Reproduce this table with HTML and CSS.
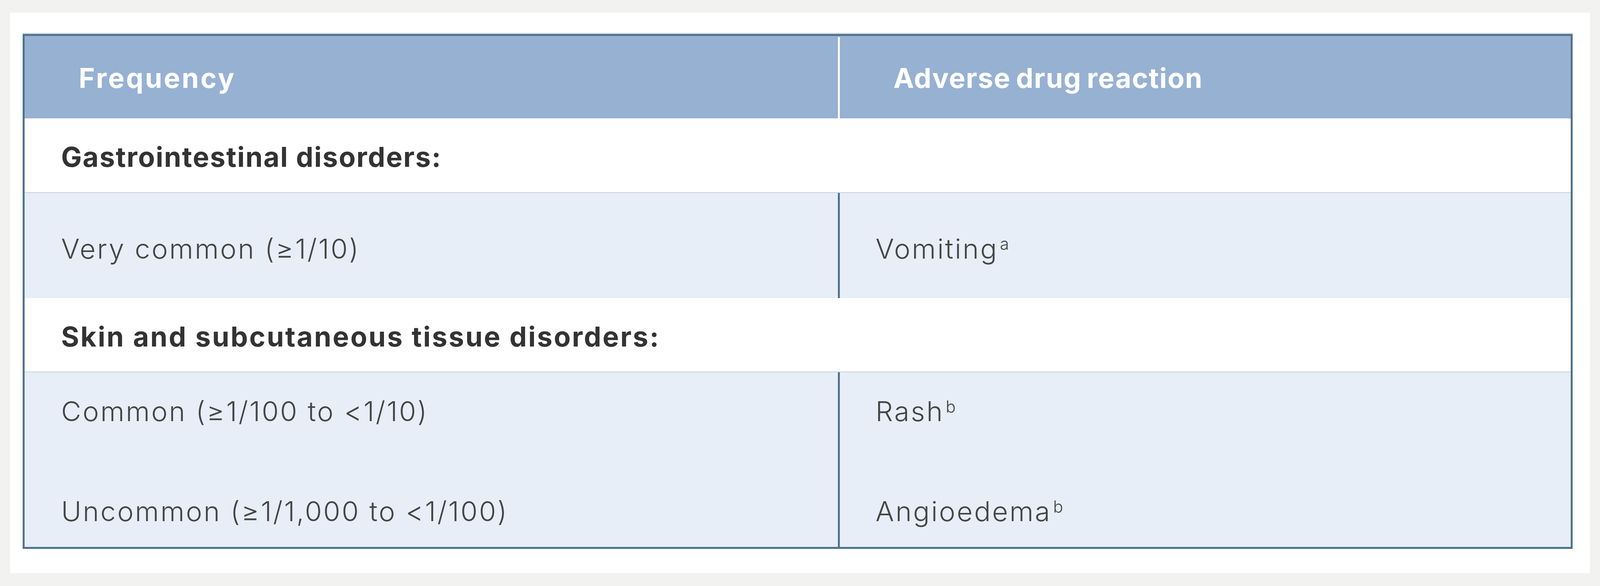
FILE: index.html
```html
<!DOCTYPE html>
<html lang="en">
<head>
<meta charset="utf-8">
<title>Adverse drug reactions</title>
<link rel="stylesheet" href="styles.css">
</head>
<body>
<div class="card">
  <div class="adr-table">
    <div class="row head">
      <div class="cell col-freq">Frequency</div>
      <div class="cell col-adr">Adverse drug reaction</div>
    </div>
    <div class="row category category-gi">
      <div class="cell">Gastrointestinal disorders:</div>
    </div>
    <div class="row data data-gi">
      <div class="cell col-freq"><p>Very common (≥1/10)</p></div>
      <div class="cell col-adr"><p>Vomiting<sup>a</sup></p></div>
    </div>
    <div class="row category category-skin">
      <div class="cell">Skin and subcutaneous tissue disorders:</div>
    </div>
    <div class="row data data-skin">
      <div class="cell col-freq">
        <p>Common (≥1/100 to &lt;1/10)</p>
        <p>Uncommon (≥1/1,000 to &lt;1/100)</p>
      </div>
      <div class="cell col-adr">
        <p>Rash<sup>b</sup></p>
        <p>Angioedema<sup>b</sup></p>
      </div>
    </div>
  </div>
</div>
</body>
</html>
```

FILE: styles.css
```css
* { box-sizing: border-box; }

html, body { margin: 0; }

html { overflow: hidden; }

body {
  background: #f2f2f0;
  padding: 32px 0.64vw;
  font-family: Inter, "Liberation Sans", sans-serif;
  font-size: 1.72vw;
}

.card {
  background: #ffffff;
  height: 1435px;
  padding: 55px 1.06vw 62px 0.78vw;
}

.adr-table {
  border: 5px solid #4e7390;
  box-shadow: 0 -3px 0 #d3dbe3;
  background: #e7eef8;
}

.row {
  display: grid;
  grid-template-columns: 2542fr 2292fr;
}

.cell {
  display: flex;
  align-items: center;
  min-width: 0;
  white-space: nowrap;
}

.cell p { margin: 0; line-height: 100px; }

/* header */
.head {
  height: 211px;
  background: #97b1d2;
  color: #ffffff;
  font-weight: 700;
  padding-top: 3px;
}
.head .col-freq {
  padding-left: 3.38vw;
  letter-spacing: 0.058em;
}
.head .col-adr {
  padding-left: 3.36vw;
  border-left: 5px solid #ffffff;
  letter-spacing: 0.023em;
  word-spacing: -0.07em;
}

/* category rows */
.category {
  display: flex;
  background: #ffffff;
  border-bottom: 2px solid #c6d1dc;
  color: #333333;
  font-weight: 700;
}
.category .cell { padding-left: 2.28vw; }
.category-gi {
  height: 191px;
  padding-top: 7px;
  letter-spacing: 0.031em;
}
.category-skin {
  height: 190px;
  padding-top: 8px;
  letter-spacing: 0.049em;
}

/* data rows */
.data {
  color: #454545;
  font-weight: 300;
  letter-spacing: 0.052em;
}
.data .col-freq { padding-left: 2.28vw; }
.data .col-adr {
  padding-left: 2.24vw;
  border-left: 5px solid #4e7390;
}
.data-gi { height: 269px; }
.data-gi .cell { padding-top: 16px; }
.data-skin { height: 447px; }
.data-skin .cell {
  flex-direction: column;
  align-items: flex-start;
  justify-content: flex-start;
  gap: 156px;
  padding-top: 50px;
}

sup {
  font-size: 0.6em;
  vertical-align: 0.53em;
  line-height: 0;
  letter-spacing: 0;
  margin-left: 0.1em;
}
```
